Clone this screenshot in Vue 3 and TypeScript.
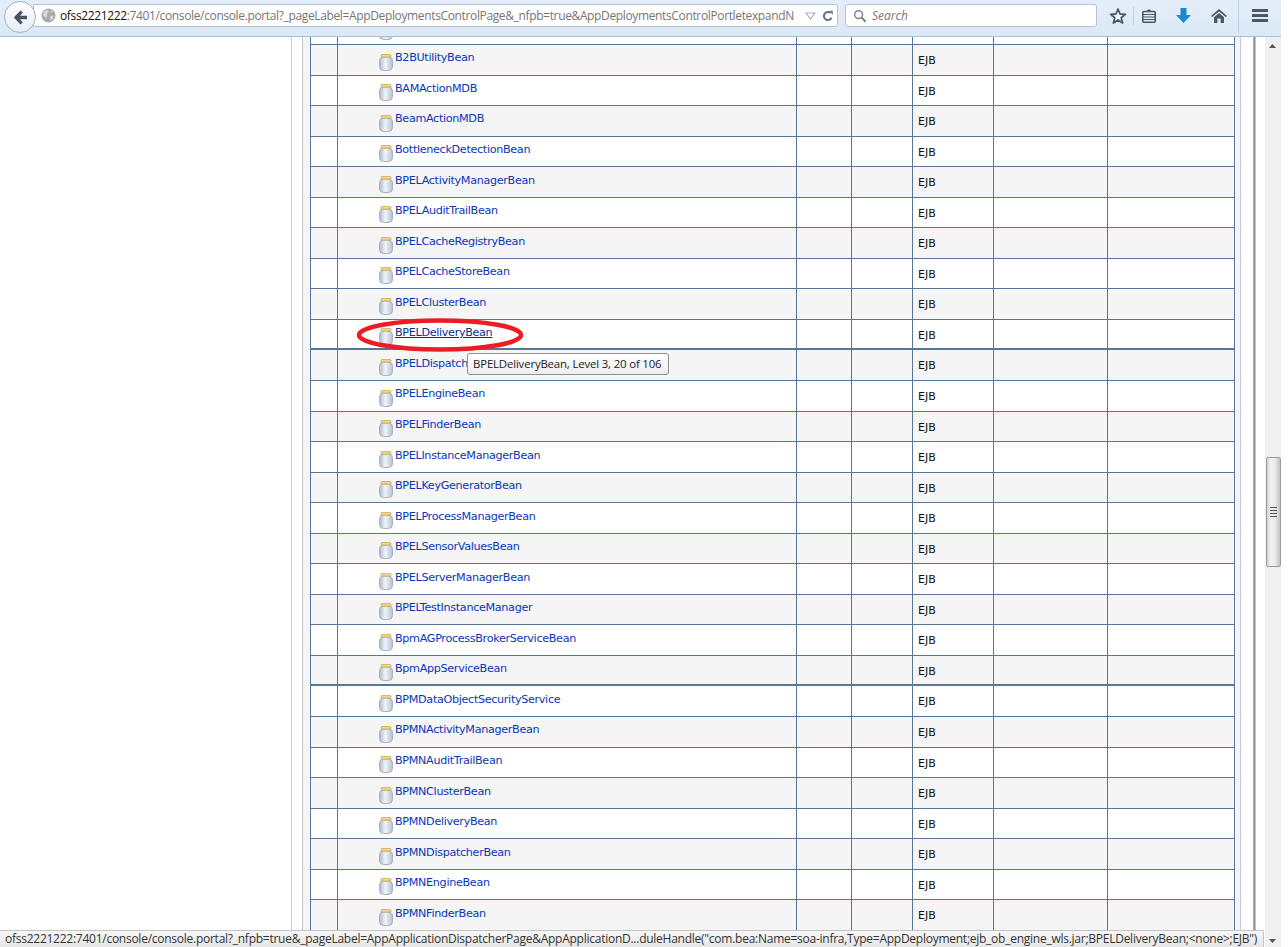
<script setup lang="ts">
const names: string[] = [
  'B2BUtilityBean','BAMActionMDB','BeamActionMDB','BottleneckDetectionBean','BPELActivityManagerBean',
  'BPELAuditTrailBean','BPELCacheRegistryBean','BPELCacheStoreBean','BPELClusterBean','BPELDeliveryBean',
  'BPELDispatcherBean','BPELEngineBean','BPELFinderBean','BPELInstanceManagerBean','BPELKeyGeneratorBean',
  'BPELProcessManagerBean','BPELSensorValuesBean','BPELServerManagerBean','BPELTestInstanceManager',
  'BpmAGProcessBrokerServiceBean','BpmAppServiceBean','BPMDataObjectSecurityService','BPMNActivityManagerBean',
  'BPMNAuditTrailBean','BPMNClusterBean','BPMNDeliveryBean','BPMNDispatcherBean','BPMNEngineBean','BPMNFinderBean'
]
const thickAfter = new Set<string>(['BPELDeliveryBean', 'BpmAppServiceBean'])
const hovered = 'BPELDeliveryBean'
const statusText = 'ofss2221222:7401/console/console.portal?_nfpb=true&_pageLabel=AppApplicationDispatcherPage&AppApplicationD...duleHandle("com.bea:Name=soa-infra,Type=AppDeployment;ejb_ob_engine_wls.jar;BPELDeliveryBean;<none>;EJB")'
</script>

<template>
  <div class="screen">
    <div class="browser">
      <header class="toolbar">
        <button class="back">
          <svg width="15" height="15" viewBox="0 0 15 15"><path d="M7.5 0.5 L0.8 7.5 L7.5 14.5 L9.8 12.4 L7 9.3 H14 V5.7 H7 L9.8 2.6 Z" fill="#47525e"/></svg>
        </button>
        <div class="urlbar">
          <svg class="globe" width="15" height="15" viewBox="0 0 15 15">
            <circle cx="7.5" cy="7.5" r="7" fill="#a9a9a9"/>
            <path d="M3 3 L7 2 L8 4 L5.5 6 L6.5 8 L4.5 10 L2 7 Z M9 8 L12.5 7.5 L12 11 L9.5 13 Z M9.5 2 L12 3.5 L10.5 5 Z" fill="#d9d9d9"/>
          </svg>
          <div class="url"><span class="host">ofss2221222</span>:7401/console/console.portal?_pageLabel=AppDeploymentsControlPage&amp;_nfpb=true&amp;AppDeploymentsControlPortletexpandN</div>
          <svg class="drop" width="11" height="8" viewBox="0 0 11 8"><path d="M1 1 H10 L5.5 7 Z" fill="none" stroke="#a9b0b8" stroke-width="1.2"/></svg>
          <svg class="reload" width="12" height="12" viewBox="0 0 15 15">
            <path d="M12 9.5 A5 5 0 1 1 10.5 3.6" fill="none" stroke="#68757f" stroke-width="2.6"/>
            <path d="M8.5 1 H13.5 V6 Z" fill="#68757f"/>
          </svg>
        </div>
        <div class="search">
          <svg width="14" height="14" viewBox="0 0 15 15">
            <circle cx="6" cy="6" r="4.2" fill="none" stroke="#80858b" stroke-width="1.6"/>
            <path d="M9.2 9.2 L13.6 13.6" stroke="#80858b" stroke-width="2.2"/>
          </svg>
          <span>Search</span>
        </div>
        <div class="tools">
          <svg class="star" width="18" height="18" viewBox="0 0 18 18"><path d="M9 2 L11 7 L16.4 7.3 L12.2 10.7 L13.6 16 L9 13 L4.4 16 L5.8 10.7 L1.6 7.3 L7 7 Z" fill="#f4f8fc" stroke="#4b5866" stroke-width="1.8" stroke-linejoin="round"/></svg>
          <span class="thin-sep"></span>
          <svg class="clip" width="14" height="14" viewBox="0 0 14 14">
            <rect x="0.8" y="2.5" width="12.4" height="10.7" rx="1" fill="none" stroke="#4b5866" stroke-width="1.6"/>
            <path d="M4.5 2.5 L6 0.5 H8 L9.5 2.5 Z" fill="#4b5866"/>
            <path d="M1 5.5 H13 M1 8 H13 M1 10.5 H13" stroke="#4b5866" stroke-width="1"/>
          </svg>
          <svg class="down" width="15" height="15" viewBox="0 0 15 15"><path d="M4.5 0 H10.5 V7 H15 L7.5 15 L0 7 H4.5 Z" fill="#1a88d2"/></svg>
          <svg class="home" width="16" height="14" viewBox="0 0 16 14">
            <path d="M8 0 L16 7 L14.8 8 L8 2.4 L1.2 8 L0 7 Z" fill="#4b5866"/>
            <path d="M3 8.2 L8 4 L13 8.2 V14 H9.6 V9.5 H6.4 V14 H3 Z" fill="#4b5866"/>
          </svg>
          <span class="sep"></span>
          <div class="menu"><i></i><i></i><i></i></div>
        </div>
      </header>

      <div class="page">
        <aside class="side"></aside>
        <main class="content">
          <div class="table-wrap">
            <div class="tbl">
              <div class="row partial">
                <div class="c c1"></div>
                <div class="c c2 partial-name">
                  <svg class="jar" width="15" height="18" viewBox="0 0 15 18">
                    <defs>
                      <linearGradient id="jb0" x1="0" x2="1" y1="0" y2="0"><stop offset="0" stop-color="#a9b9cc"/><stop offset="0.45" stop-color="#f1f4f8"/><stop offset="1" stop-color="#b3c2d3"/></linearGradient>
                    </defs>
                    <rect x="0.5" y="3" width="13" height="14.5" rx="4" fill="url(#jb0)" stroke="#a8b3bf"/>
                  </svg>
                </div>
                <div class="c c3"></div><div class="c c4"></div><div class="c c5"></div><div class="c c6"></div><div class="c c7"></div>
              </div>
              <div v-for="(n, i) in names" :key="n" class="row" :class="{ odd: i % 2 === 0, thick: thickAfter.has(n) }">
                <div class="c c1"></div>
                <div class="c c2">
                  <svg class="jar" width="15" height="18" viewBox="0 0 15 18">
                    <defs>
                      <linearGradient :id="'jb' + (i + 1)" x1="0" x2="1" y1="0" y2="0"><stop offset="0" stop-color="#a9b9cc"/><stop offset="0.45" stop-color="#f1f4f8"/><stop offset="1" stop-color="#b3c2d3"/></linearGradient>
                    </defs>
                    <rect x="0.5" y="4" width="13" height="13.5" rx="4" :fill="'url(#jb' + (i + 1) + ')'" stroke="#a8b3bf"/>
                    <rect x="2" y="1.6" width="10" height="2.4" rx="0.8" fill="#eedd9c" stroke="#cba640" stroke-width="0.8"/>
                  </svg>
                  <a class="link" :class="{ hover: n === hovered }">{{ n }}</a>
                </div>
                <div class="c c3"></div>
                <div class="c c4"></div>
                <div class="c c5"><span class="ejb">EJB</span></div>
                <div class="c c6"></div>
                <div class="c c7"></div>
              </div>
            </div>
          </div>
          <div class="shadow-gutter"></div>
        </main>
        <div class="scrollbar">
          <svg class="arrow" width="7" height="4" viewBox="0 0 7 4"><path d="M0 4 L3.5 0 L7 4 Z" fill="#555"/></svg>
          <div class="thumb"><div class="grip"><i></i><i></i><i></i><i></i></div></div>
          <svg class="arrow bottom" width="7" height="4" viewBox="0 0 7 4"><path d="M0 0 L3.5 4 L7 0 Z" fill="#555"/></svg>
        </div>
      </div>
    </div>

    <svg class="circle" width="176" height="42" viewBox="0 0 176 42"><ellipse cx="88" cy="21" rx="81" ry="14.5" fill="none" stroke="#ed1c24" stroke-width="4.5"/></svg>
    <div class="tooltip">BPELDeliveryBean, Level 3, 20 of 106</div>
    <footer class="status">{{ statusText }}</footer>
  </div>
</template>

<style>
html, body { margin: 0; background: #fff; }
</style>

<style scoped>
.screen { position: relative; width: 1288px; height: 947px; overflow: hidden; background: #fff; font-family: "Open Sans", "Noto Sans", sans-serif; }
.browser { width: 1281px; height: 947px; display: flex; flex-direction: column; }

.toolbar { height: 37px; box-sizing: border-box; flex: none; display: flex; align-items: flex-start; background: linear-gradient(#e4eef9, #dbe8f6); border-bottom: 1px solid #a9bfd6; position: relative; }
.back { width: 32px; height: 32px; margin: 1px 0 0 4px; padding: 0; border-radius: 50%; border: 1px solid #a4b3c4; background: linear-gradient(#fdfeff, #e6edf5); display: flex; align-items: center; justify-content: center; position: relative; z-index: 1; flex: none; }
.urlbar { width: 805px; height: 23px; margin: 4px 0 0 -3px; box-sizing: border-box; padding-left: 7px; border: 1px solid #b3c4d6; border-radius: 0 3px 3px 0; background: #fff; display: flex; align-items: center; flex: none; }
.globe { flex: none; }
.url { width: 740px; margin-left: 4px; font-size: 12px; letter-spacing: -0.36px; color: #767676; white-space: nowrap; overflow: hidden; flex: none; }
.host { color: #111; }
.drop { margin-left: 5px; flex: none; }
.reload { margin-left: 6px; flex: none; }
.search { width: 252px; height: 23px; margin: 4px 0 0 7px; box-sizing: border-box; padding-left: 7px; border: 1px solid #b3c4d6; border-radius: 3px; background: #fff; display: flex; align-items: center; gap: 5px; flex: none; font-size: 12px; font-style: italic; color: #777; }
.tools { display: flex; align-items: center; height: 36px; position: relative; flex: 1; }
.star { position: absolute; left: 12px; top: 7px; }
.thin-sep { position: absolute; left: 36px; top: 7px; width: 1px; height: 18px; background: #c4d2e0; }
.clip { position: absolute; left: 45px; top: 9px; }
.down { position: absolute; left: 79px; top: 8px; }
.home { position: absolute; left: 114px; top: 9px; }
.sep { position: absolute; left: 141px; top: 0; width: 1px; height: 33px; background: #c4d2e0; }
.menu { position: absolute; left: 155px; top: 9px; width: 16px; display: flex; flex-direction: column; gap: 2px; }
.menu i { display: block; height: 3px; background: #4b5866; }

.page { flex: 1; display: flex; min-height: 0; }
.side { width: 292px; flex: none; box-sizing: border-box; border-right: 1px solid #cfcfcf; background: #fff; }
.content { width: 973px; flex: none; display: flex; overflow: hidden; padding-left: 10px; box-sizing: border-box; }
.table-wrap { width: 939px; flex: none; box-sizing: border-box; border-left: 1px solid #c8c8c8; border-right: 1px solid #c8c8c8; background: #f5f5f5; padding: 0 6px 0 7px; }
.shadow-gutter { width: 3px; margin-left: 12px; flex: none; height: 100%; box-sizing: border-box; border-left: 1px solid #b0b0b0; border-right: 1px solid #c4c4c4; background: #8f8f8f; }
.tbl { width: 924px; border-right: 1px solid #577699; box-sizing: content-box; }
.row { display: grid; grid-template-columns: 27px 459px 55px 61px 81px 114px 127px; height: 30.55px; box-sizing: border-box; border-bottom: 1px solid #577699; background: #fff; }
.row.odd { background: #f5f5f5; }
.row.partial { height: 8px; }
.row.thick { border-bottom-width: 2px; }
.c { border-left: 1px solid #577699; box-sizing: border-box; min-width: 0; font-size: 12px; position: relative; }
.c2 { overflow: hidden; }
.c2 .jar { position: absolute; left: 41px; top: 7.5px; }
.partial-name .jar { top: -15px; }
.link { position: absolute; left: 57px; top: 4.4px; font-family: "DejaVu Sans", sans-serif; font-size: 11.2px; line-height: 18px; letter-spacing: -0.33px; color: #0a36b8; white-space: nowrap; }
.link.hover { color: #0a2f8f; text-decoration: underline; }
.ejb { position: absolute; left: 5px; top: 7px; font-family: "DejaVu Sans", sans-serif; font-size: 11px; line-height: 18px; color: #111; }

.scrollbar { width: 16px; flex: none; background: #f0f0f0; position: relative; display: flex; flex-direction: column; align-items: center; }
.arrow { position: absolute; top: 7px; left: 4px; }
.arrow.bottom { top: auto; bottom: 4px; }
.thumb { margin-top: 420px; width: 15px; height: 110px; box-sizing: border-box; border: 1px solid #9c9c9c; border-radius: 2px; background: linear-gradient(90deg, #cfcfcf, #f1f1f1 25%, #ececec 60%, #c2c2c2); display: flex; align-items: center; justify-content: center; }
.grip { width: 7px; display: flex; flex-direction: column; gap: 2px; }
.grip i { display: block; height: 1px; background: #555; }

.circle { position: absolute; left: 352px; top: 314px; }
.tooltip { position: absolute; left: 467px; top: 353px; width: 202px; height: 22px; box-sizing: border-box; padding-left: 5px; border: 1px solid #8f8f8f; border-radius: 3px; background: linear-gradient(#fff, #eeeeee); font-size: 11.4px; letter-spacing: -0.16px; line-height: 20px; color: #1a1a1a; white-space: nowrap; }
.status { position: absolute; left: 0; top: 930px; width: 1264px; height: 17px; box-sizing: border-box; padding-left: 5px; border-top: 1px solid #c4c4c4; border-right: 1px solid #c4c4c4; border-top-right-radius: 2px; background: linear-gradient(#f7f7f7, #e6e6e6); font-size: 12px; letter-spacing: -0.255px; line-height: 16px; color: #333; white-space: nowrap; overflow: hidden; }
</style>
